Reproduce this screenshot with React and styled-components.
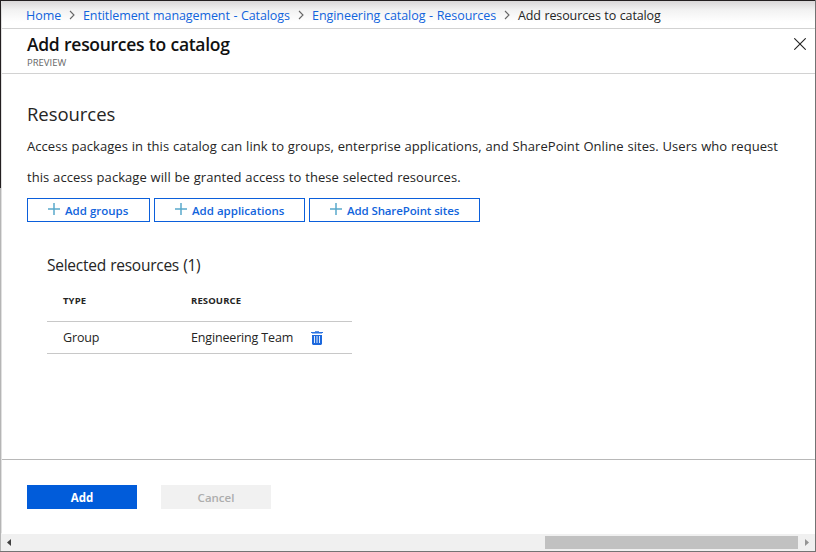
import React from "react";
import styled, { createGlobalStyle } from "styled-components";

const GlobalStyle = createGlobalStyle`
  * { box-sizing: border-box; }
  body { margin: 0; }
  button { font: inherit; margin: 0; padding: 0; }
`;

const Frame = styled.div`
  display: grid;
  grid-template-columns: 2px 1fr;
  width: 816px;
  height: 552px;
  border: solid #737373;
  border-width: 0 1px 1px 0;
  background: #fff;
  color: #252525;
  font: 13px "Open Sans", "Noto Sans", sans-serif;
  overflow: hidden;
`;

const Edge = styled.div`
  background:
    linear-gradient(#231f20 0 188px, #b5b5b5 188px) 0 0 / 1px 100% no-repeat,
    linear-gradient(#231f20 0 1px, #e0e0e0 1px 533px, #f0f0f0 533px) 1px 0 / 1px 100% no-repeat;
`;

const Blade = styled.main`
  display: grid;
  grid-template-rows: 29px 45px 385px 75px 17px;
  min-width: 0;
  white-space: nowrap;
`;

const Breadcrumbs = styled.nav`
  display: flex;
  align-items: center;
  padding-left: 24px;
  border-top: 1px solid #231f20;
  border-bottom: 1px solid #d2d2d2;
  background: linear-gradient(#d9d7d8, #f2f2f2 9px, #fff 21px);
`;

const Crumb = styled.a`
  width: ${(p) => p.$width}px;
  padding-top: 2px;
  font-size: 12.5px;
  line-height: 25px;
  color: ${(p) => (p.$current ? "#252525" : "#1164dc")};
  letter-spacing: ${(p) => p.$spacing}px;
  word-spacing: 0.5px;
`;

const CrumbArrow = styled.svg`
  width: 22px;
  height: 10px;
  flex: none;
  fill: none;
  stroke: #666;
  stroke-width: 1.1;
`;

const TitleBar = styled.header`
  display: flex;
  justify-content: space-between;
  padding: 3px 9px 0 25px;
  border-bottom: 1px solid #d2d2d2;
`;

const Title = styled.h1`
  margin: 0;
  font-size: 17.5px;
  line-height: 25px;
  font-weight: 600;
  letter-spacing: -0.3px;
  word-spacing: 0.4px;
  color: #111;
`;

const Preview = styled.div`
  font-size: 9.5px;
  line-height: 12px;
  color: #666;
`;

const CloseButton = styled.button`
  display: flex;
  width: 12px;
  height: 12px;
  margin-top: 6px;
  border: 0;
  background: none;
  svg { width: 12px; height: 12px; fill: none; stroke: #222; stroke-width: 1.1; }
`;

const Content = styled.section`
  padding: 28px 25px 0;
`;

const Heading = styled.h2`
  margin: 0;
  font-size: 18.5px;
  line-height: 24px;
  font-weight: 400;
  letter-spacing: -0.05px;
`;

const Description = styled.p`
  margin: 5px 0;
  line-height: 31px;
  letter-spacing: 0.05px;
  word-spacing: 0.4px;
`;

const Actions = styled.div`
  display: flex;
  gap: 4px;
`;

const AddButton = styled.button`
  display: flex;
  align-items: center;
  gap: 5px;
  width: ${(p) => p.$width}px;
  height: 24px;
  padding-left: 20px;
  border: 1px solid #0b5fdb;
  background: #fff;
  color: #1164dc;
  font-size: 11.5px;
  line-height: 22px;
  font-weight: 600;
  letter-spacing: ${(p) => p.$spacing || 0}px;
  span { padding-top: 1px; }
  svg { width: 12px; height: 12px; margin-top: -2px; flex: none; stroke: #59a9cb; stroke-width: 1.5; }
`;

const Selected = styled.section`
  width: 305px;
  margin: 31px 0 0 20px;
`;

const SelectedHeading = styled.h3`
  margin: 0;
  font-size: 15.5px;
  line-height: 24px;
  font-weight: 400;
  letter-spacing: -0.25px;
  word-spacing: 0.4px;
`;

const TableRow = styled.div`
  display: grid;
  grid-template-columns: 128px 120px 12px;
  align-items: center;
  height: ${(p) => (p.$head ? 45 : 32)}px;
  padding: ${(p) => (p.$head ? 3 : 0)}px 0 0 16px;
  border-bottom: 1px solid #c8c8c8;
  font-size: ${(p) => (p.$head ? 9.5 : 12.5)}px;
  font-weight: ${(p) => (p.$head ? 700 : 400)};
  letter-spacing: ${(p) => (p.$head ? 0.12 : -0.16)}px;
`;

const TrashIcon = styled.svg`
  width: 12px;
  height: 14px;
  margin-top: 1px;
`;

const Footer = styled.footer`
  display: flex;
  gap: 24px;
  padding: 25px 25px 0;
  border-top: 1px solid #b8b8b8;
`;

const FooterButton = styled.button`
  width: 110px;
  height: 24px;
  padding-top: 1px;
  border: 0;
  background: ${(p) => (p.$primary ? "#015cda" : "#f1f1f1")};
  color: ${(p) => (p.$primary ? "#fff" : "#adadad")};
  font-size: 11.5px;
  line-height: 24px;
  font-weight: ${(p) => (p.$primary ? 700 : 600)};
`;

const ScrollBar = styled.div`
  display: flex;
  align-items: center;
  background: #f0f0f0;
`;

const ScrollArrow = styled.svg`
  width: 4px;
  height: 7px;
  margin: ${(p) => (p.$right ? "0 0 0 7px" : "0 0 0 5px")};
  fill: ${(p) => (p.$right ? "#959595" : "#404040")};
`;

const Thumb = styled.div`
  width: 253px;
  height: 13px;
  margin-left: 534px;
  background: #c1c1c1;
`;

const Plus = () => (
  <svg viewBox="0 0 12 12"><path d="M6 0V12M0 6H12" /></svg>
);

const Arrow = () => (
  <CrumbArrow viewBox="0 0 22 10"><path d="M9 1l4 4-4 4" /></CrumbArrow>
);

export default function App() {
  return (
    <Frame>
      <GlobalStyle />
      <Edge />
      <Blade>
        <Breadcrumbs>
          <Crumb $width={35} $spacing={-0.05}>Home</Crumb>
          <Arrow />
          <Crumb $width={207} $spacing={-0.1}>Entitlement management - Catalogs</Crumb>
          <Arrow />
          <Crumb $width={184} $spacing={-0.06}>Engineering catalog - Resources</Crumb>
          <Arrow />
          <Crumb $width={150} $spacing={-0.12} $current>Add resources to catalog</Crumb>
        </Breadcrumbs>
        <TitleBar>
          <div>
            <Title>Add resources to catalog</Title>
            <Preview>PREVIEW</Preview>
          </div>
          <CloseButton aria-label="Close">
            <svg viewBox="0 0 12 12"><path d="M.3 .3L11.7 11.7M11.7 .3L.3 11.7" /></svg>
          </CloseButton>
        </TitleBar>
        <Content>
          <Heading>Resources</Heading>
          <Description>
            Access packages in this catalog can link to groups, enterprise applications, and SharePoint Online sites. Users who request
            <br />
            this access package will be granted access to these selected resources.
          </Description>
          <Actions>
            <AddButton $width={123}><Plus /><span>Add groups</span></AddButton>
            <AddButton $width={151}><Plus /><span>Add applications</span></AddButton>
            <AddButton $width={171} $spacing={-0.12}><Plus /><span>Add SharePoint sites</span></AddButton>
          </Actions>
          <Selected>
            <SelectedHeading>Selected resources (1)</SelectedHeading>
            <TableRow $head><span>TYPE</span><span>RESOURCE</span></TableRow>
            <TableRow>
              <span>Group</span>
              <span>Engineering Team</span>
              <TrashIcon viewBox="0 0 12 14">
                <path d="M4 0h4v1H4z" fill="#5c93e6" />
                <path d="M0 1h12v1H0z" fill="#2a72df" />
                <path d="M1 2h10v1H1z" fill="#8db4ef" />
                <path d="M1 4h10v9l-1 1H2l-1-1z" fill="#1c68dd" />
                <path d="M3 5h1v7H3zM5.5 5h1v7h-1zM8 5h1v7H8z" fill="#dce9fc" />
              </TrashIcon>
            </TableRow>
          </Selected>
        </Content>
        <Footer>
          <FooterButton $primary>Add</FooterButton>
          <FooterButton disabled>Cancel</FooterButton>
        </Footer>
        <ScrollBar>
          <ScrollArrow viewBox="0 0 4 7"><path d="M4 0v7L0 3.5z" /></ScrollArrow>
          <Thumb />
          <ScrollArrow $right viewBox="0 0 4 7"><path d="M0 0v7l4-3.5z" /></ScrollArrow>
        </ScrollBar>
      </Blade>
    </Frame>
  );
}
